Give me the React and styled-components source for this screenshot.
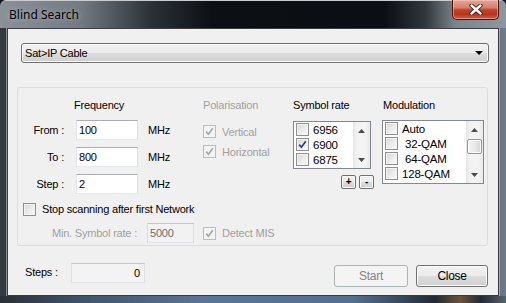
import React from "react";
import styled, { createGlobalStyle, css } from "styled-components";

const GlobalStyle = createGlobalStyle`
  html, body {
    margin: 0;
    padding: 0;
    background: #101418;
  }
  body {
    font-family: "Liberation Sans", Arial, sans-serif;
    font-size: 11px;
    letter-spacing: -0.2px;
    color: #000;
  }
  * {
    box-sizing: border-box;
  }
`;

const Window = styled.div`
  width: 506px;
  height: 303px;
  display: flex;
  flex-direction: column;
  background: linear-gradient(to right, #34393e 0%, #262a2f 40%, #2b3138 75%, #6f7a86 100%);
  border-radius: 6px 6px 0 0;
  overflow: hidden;
`;

const TitleBar = styled.div`
  position: relative;
  height: 28px;
  flex-shrink: 0;
  display: flex;
  align-items: center;
  padding-left: 9px;
  border-top: 1px solid #c9cdd1;
  background: linear-gradient(
    to right,
    #8a9198 0%,
    #737a82 16%,
    #2a3036 30%,
    #0c1015 42%,
    #0b0e14 76%,
    #30363c 84%,
    #7c848b 90%,
    #8f969c 100%
  );
`;

const TitleText = styled.span`
  font-family: "Noto Sans", "Open Sans", sans-serif;
  font-size: 12px;
  letter-spacing: 0;
  color: #000;
  text-shadow: 0 0 5px rgba(235, 240, 245, 0.55);
  margin-top: -1px;
`;

const CloseButton = styled.div`
  position: absolute;
  top: -1px;
  right: 7px;
  width: 47px;
  height: 20px;
  border: 1px solid #4b1811;
  border-top: none;
  border-radius: 0 0 5px 5px;
  background: linear-gradient(
    #e6a596 0%,
    #d7806c 40%,
    #c2422b 52%,
    #b8341d 75%,
    #cf5f45 100%
  );
  box-shadow: inset 0 0 0 1px rgba(255, 220, 210, 0.45);
  display: flex;
  align-items: center;
  justify-content: center;
`;

const Body = styled.div`
  flex: 1;
  display: flex;
  padding: 0 7px;
`;

const Client = styled.div`
  width: 492px;
  height: 268px;
  background: #f0f0f0;
  border: 1px solid #3a3f45;
  box-shadow: 0 0 0 1px rgba(205, 212, 220, 0.55);
  padding: 14px 10px 0 9px;
  display: flex;
  flex-direction: column;
`;

const BottomFrame = styled.div`
  height: 7px;
  flex-shrink: 0;
  background: linear-gradient(
    to right,
    #2a2f34 0%,
    #3f5168 15%,
    #5b7594 40%,
    #53708f 70%,
    #232a33 86%,
    #6b5438 91%,
    #232a33 95%,
    #56636f 100%
  );
`;

const win7Button = css`
  border: 1px solid #707070;
  border-radius: 3px;
  background: linear-gradient(#f2f2f2 0%, #ebebeb 50%, #dddddd 51%, #cfcfcf 100%);
  box-shadow: inset 0 0 0 1px #fbfbfb;
`;

const Dropdown = styled.div`
  ${win7Button};
  margin-left: 4px;
  width: 468px;
  height: 20px;
  display: flex;
  align-items: center;
  justify-content: space-between;
  padding: 0 5px 0 3px;
`;

const GroupBox = styled.div`
  margin-top: 24px;
  width: 471px;
  height: 159px;
  border: 1px solid #d5dfe5;
  border-radius: 3px;
  padding-top: 10px;
  display: flex;
  flex-direction: column;
`;

const TopRow = styled.div`
  display: flex;
  align-items: flex-start;
`;

const Column = styled.div`
  width: ${(p) => p.$width}px;
  display: flex;
  flex-direction: column;
  flex-shrink: 0;
`;

const Heading = styled.div`
  height: 14px;
  line-height: 14px;
  padding-left: ${(p) => p.$indent || 0}px;
  margin-bottom: ${(p) => p.$after || 0}px;
  color: ${(p) => (p.$disabled ? "#a0a0a0" : "#000")};
`;

const FieldRow = styled.div`
  display: flex;
  align-items: center;
  height: 20px;
  & + & {
    margin-top: 7px;
  }
`;

const FieldLabel = styled.span`
  width: ${(p) => p.$width}px;
  text-align: right;
  margin-right: ${(p) => p.$gap}px;
  color: ${(p) => (p.$disabled ? "#a0a0a0" : "#000")};
  flex-shrink: 0;
`;

const TextBox = styled.div`
  width: ${(p) => p.$width}px;
  height: 20px;
  line-height: 18px;
  padding: 0 ${(p) => (p.$right ? 4 : 2)}px;
  text-align: ${(p) => (p.$right ? "right" : "left")};
  border: 1px solid;
  border-color: #abadb3 #dbdfe6 #e3e9ef #e2e3ea;
  background: #fff;
  flex-shrink: 0;
  ${(p) =>
    p.$disabled &&
    css`
      background: #f2f2f2;
      border-color: #c4c8cd #d9dde2 #dfe3e8 #d9dde2;
      color: #6d6d6d;
    `}
  ${(p) =>
    p.$readonly &&
    css`
      background: #f3f3f3;
      border-color: #c6cace #dcdfe3 #e1e4e8 #dcdfe3;
    `}
`;

const Unit = styled.span`
  margin-left: 10px;
`;

const CheckRow = styled.div`
  display: flex;
  align-items: center;
  gap: 6px;
  height: 13px;
  margin-bottom: ${(p) => p.$after || 0}px;
  padding-left: ${(p) => p.$indent || 0}px;
  color: ${(p) => (p.$disabled ? "#a0a0a0" : "#000")};
`;

const Box = styled.span`
  width: 13px;
  height: 13px;
  flex-shrink: 0;
  display: inline-flex;
  align-items: center;
  justify-content: center;
  border: 1px solid #8e8f8f;
  background: linear-gradient(135deg, #d6d6d6 0%, #eeeeee 60%, #fbfbfb 100%);
  box-shadow: inset 0 0 0 1px #f4f4f4;
  ${(p) =>
    p.$disabled &&
    css`
      border-color: #bcbcbc;
      background: #f4f4f4;
      box-shadow: none;
    `}
`;

const ListBox = styled.div`
  margin-top: ${(p) => p.$top}px;
  width: ${(p) => p.$width}px;
  height: ${(p) => p.$height}px;
  border: 1px solid #828790;
  background: #fff;
  display: flex;
  overflow: hidden;
`;

const Items = styled.div`
  flex: 1;
  display: flex;
  flex-direction: column;
`;

const Item = styled.div`
  height: 15px;
  flex-shrink: 0;
  display: flex;
  align-items: center;
  gap: 4px;
  padding-left: 2px;
  font-size: 11.5px;
  white-space: pre;
`;

const ScrollBar = styled.div`
  width: 17px;
  display: flex;
  flex-direction: column;
  background: linear-gradient(to right, #e6e6e6, #f3f3f3 25%, #f3f3f3 75%, #e9e9e9);
`;

const Arrow = styled.div`
  height: 17px;
  display: flex;
  align-items: center;
  justify-content: center;
`;

const Track = styled.div`
  flex: 1;
  padding: 1px 1px 0;
`;

const Thumb = styled.div`
  height: 15px;
  border: 1px solid #979797;
  border-radius: 2px;
  background: linear-gradient(to right, #f4f4f4, #e9e9e9 50%, #d6d6d6);
  box-shadow: inset 0 0 0 1px #fbfbfb;
`;

const SmallButtons = styled.div`
  display: flex;
  gap: 3px;
  margin-top: 6px;
  padding-left: 48px;
`;

const SmallButton = styled.div`
  ${win7Button};
  width: 15px;
  height: 14px;
  border-radius: 2px;
  display: flex;
  align-items: center;
  justify-content: center;
  font-size: 10px;
  font-weight: bold;
  line-height: 1;
`;

const BottomRow = styled.div`
  display: flex;
  align-items: center;
  height: 20px;
  margin-top: ${(p) => p.$top}px;
  padding-left: ${(p) => p.$indent || 0}px;
`;

const StepsRow = styled.div`
  margin-top: 17px;
  width: 471px;
  display: flex;
  align-items: flex-start;
  padding-left: 8px;
`;

const StepsLabel = styled.span`
  width: 46px;
  line-height: 18px;
`;

const ActionButtons = styled.div`
  margin-left: auto;
  margin-top: 2px;
  display: flex;
  gap: 8px;
`;

const ActionButton = styled.div`
  ${win7Button};
  width: ${(p) => p.$width}px;
  height: 22px;
  display: flex;
  align-items: center;
  justify-content: center;
  font-size: 12px;
  letter-spacing: -0.3px;
  ${(p) =>
    p.$disabled &&
    css`
      border-color: #adb2b5;
      background: #f4f4f4;
      box-shadow: none;
      color: #838383;
    `}
`;

const Check = ({ color }) => (
  <svg width="11" height="11" viewBox="0 0 11 11">
    <path d="M2.2 5.6 L4.4 8.2 L8.8 2.2" fill="none" stroke={color} strokeWidth="1.7" />
  </svg>
);

const CheckBox = ({ checked, disabled }) => (
  <Box $disabled={disabled}>
    {checked && <Check color={disabled ? "#a6a6a6" : "#2e3f8a"} />}
  </Box>
);

const Tri = ({ down }) => (
  <svg width="7" height="4" viewBox="0 0 7 4">
    <path d={down ? "M0 0 H7 L3.5 4 Z" : "M0 4 H7 L3.5 0 Z"} fill="#4a4a4a" />
  </svg>
);

const symbolRates = [
  { v: "6956", c: false },
  { v: "6900", c: true },
  { v: "6875", c: false },
];

const modulations = ["Auto", " 32-QAM", " 64-QAM", "128-QAM"];

const App = () => {
  return (
    <>
      <GlobalStyle />
      <Window>
        <TitleBar>
          <TitleText>Blind Search</TitleText>
          <CloseButton>
            <svg width="14" height="11" viewBox="0 0 14 11">
              <path d="M2.5 1.5 L11.5 9.5 M11.5 1.5 L2.5 9.5" stroke="#3a1a14" strokeWidth="4.2" strokeLinecap="round" />
              <path d="M2.5 1.5 L11.5 9.5 M11.5 1.5 L2.5 9.5" stroke="#fff" strokeWidth="2.4" strokeLinecap="round" />
            </svg>
          </CloseButton>
        </TitleBar>
        <Body>
          <Client>
            <Dropdown>
              <span>Sat&gt;IP Cable</span>
              <svg width="8" height="4" viewBox="0 0 8 4">
                <path d="M0 0 H8 L4 4 Z" fill="#000" />
              </svg>
            </Dropdown>

            <GroupBox>
              <TopRow>
                <Column $width={185}>
                  <Heading $indent={56} $after={8}>Frequency</Heading>
                  {[
                    ["From :", "100"],
                    ["To :", "800"],
                    ["Step :", "2"],
                  ].map(([label, value]) => (
                    <FieldRow key={label}>
                      <FieldLabel $width={46} $gap={12}>{label}</FieldLabel>
                      <TextBox $width={62}>{value}</TextBox>
                      <Unit>MHz</Unit>
                    </FieldRow>
                  ))}
                </Column>

                <Column $width={90}>
                  <Heading $disabled $after={13}>Polarisation</Heading>
                  <CheckRow $disabled $after={7}>
                    <CheckBox checked disabled />
                    Vertical
                  </CheckRow>
                  <CheckRow $disabled>
                    <CheckBox checked disabled />
                    Horizontal
                  </CheckRow>
                </Column>

                <Column $width={89}>
                  <Heading>Symbol rate</Heading>
                  <ListBox $top={9} $width={78} $height={48}>
                    <Items>
                      {symbolRates.map((s) => (
                        <Item key={s.v}>
                          <CheckBox checked={s.c} />
                          {s.v}
                        </Item>
                      ))}
                    </Items>
                    <ScrollBar>
                      <Arrow><Tri /></Arrow>
                      <Track />
                      <Arrow><Tri down /></Arrow>
                    </ScrollBar>
                  </ListBox>
                  <SmallButtons>
                    <SmallButton>+</SmallButton>
                    <SmallButton>-</SmallButton>
                  </SmallButtons>
                </Column>

                <Column $width={102}>
                  <Heading $indent={1}>Modulation</Heading>
                  <ListBox $top={8} $width={102} $height={64}>
                    <Items>
                      {modulations.map((m) => (
                        <Item key={m}>
                          <CheckBox />
                          {m}
                        </Item>
                      ))}
                    </Items>
                    <ScrollBar>
                      <Arrow><Tri /></Arrow>
                      <Track>
                        <Thumb />
                      </Track>
                      <Arrow><Tri down /></Arrow>
                    </ScrollBar>
                  </ListBox>
                </Column>
              </TopRow>

              <BottomRow $top={5} $indent={5}>
                <CheckRow>
                  <CheckBox />
                  Stop scanning after first Network
                </CheckRow>
              </BottomRow>

              <BottomRow $top={4}>
                <FieldLabel $width={119} $gap={10} $disabled>Min. Symbol rate :</FieldLabel>
                <TextBox $width={47} $disabled>5000</TextBox>
                <CheckRow $disabled $indent={9}>
                  <CheckBox checked disabled />
                  Detect MIS
                </CheckRow>
              </BottomRow>
            </GroupBox>

            <StepsRow>
              <StepsLabel>Steps :</StepsLabel>
              <TextBox $width={74} $right $readonly>0</TextBox>
              <ActionButtons>
                <ActionButton $width={74} $disabled>Start</ActionButton>
                <ActionButton $width={72}>Close</ActionButton>
              </ActionButtons>
            </StepsRow>
          </Client>
        </Body>
        <BottomFrame />
      </Window>
    </>
  );
};

export default App;
